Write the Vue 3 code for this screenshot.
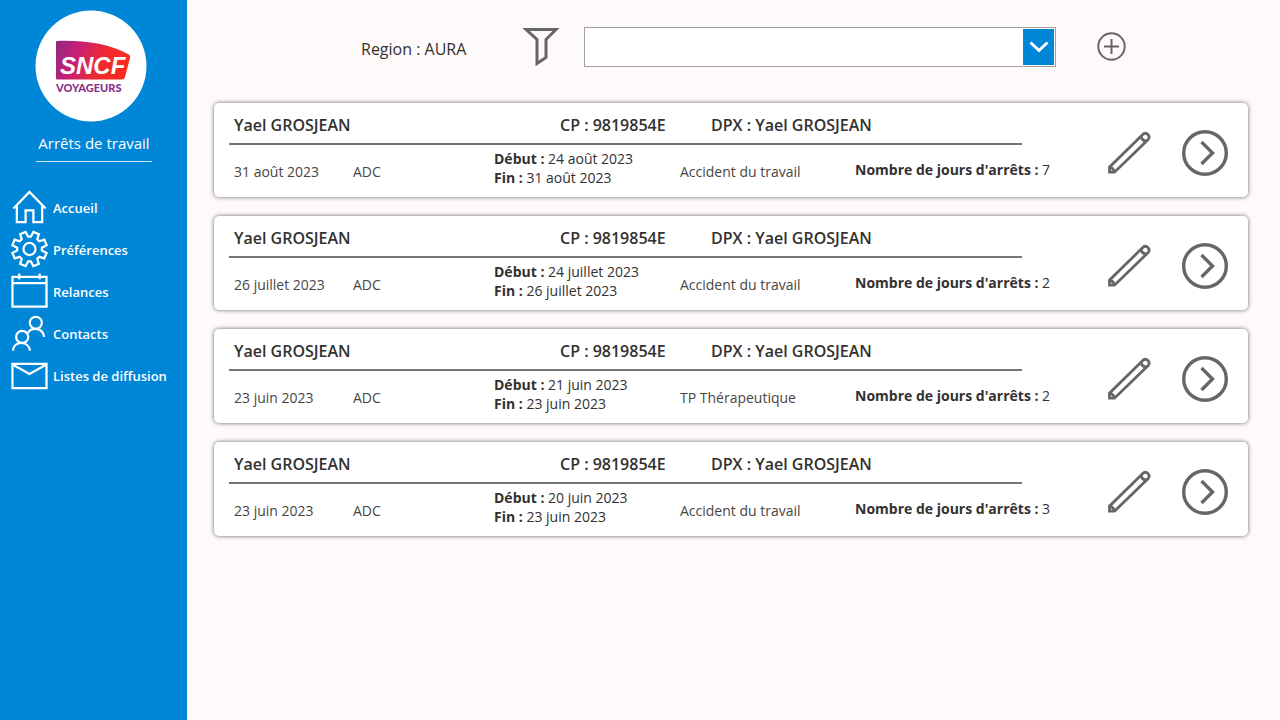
<script setup>
import { ref } from 'vue'

const navItems = [
  { label: 'Accueil', icon: 'home' },
  { label: 'Préférences', icon: 'gear' },
  { label: 'Relances', icon: 'calendar' },
  { label: 'Contacts', icon: 'people' },
  { label: 'Listes de diffusion', icon: 'mail' },
]

const selected = ref('')

const stops = [
  { id: 1, date: '31 août 2023', start: '24 août 2023', end: '31 août 2023', reason: 'Accident du travail', days: 7 },
  { id: 2, date: '26 juillet 2023', start: '24 juillet 2023', end: '26 juillet 2023', reason: 'Accident du travail', days: 2 },
  { id: 3, date: '23 juin 2023', start: '21 juin 2023', end: '23 juin 2023', reason: 'TP Thérapeutique', days: 2 },
  { id: 4, date: '23 juin 2023', start: '20 juin 2023', end: '23 juin 2023', reason: 'Accident du travail', days: 3 },
]

// Outline of an eight-toothed gear centred on (19, 18)
const gearPoints = Array.from({ length: 8 }, (_, i) => {
  const base = (i * Math.PI) / 4 + Math.PI / 8
  return [[-0.28, 12.8], [-0.17, 18], [0.17, 18], [0.28, 12.8]]
    .map(([a, r]) => `${(19 + r * Math.cos(base + a)).toFixed(1)},${(18 + r * Math.sin(base + a)).toFixed(1)}`)
    .join(' ')
}).join(' ')
</script>

<template>
  <div class="app">
    <aside class="sidebar">
      <svg class="logo" viewBox="0 0 112 112" role="img" aria-label="SNCF Voyageurs">
        <defs>
          <linearGradient id="brand" x1="0" y1="0" x2="1" y2="0.2">
            <stop offset="0" stop-color="#8c2a7c" />
            <stop offset="0.3" stop-color="#c4207a" />
            <stop offset="0.7" stop-color="#f02a30" />
            <stop offset="1" stop-color="#fa2a20" />
          </linearGradient>
        </defs>
        <circle cx="56" cy="56" r="55.5" fill="#fff" />
        <path d="M22 31 C46 30 74 33 94.500 45 Q95.500 46 95 48 L90 67 Q89.500 69.500 87 69.500 L22 69.500 Q21 69.500 21 68.500 L21 32 Q21 31 22 31 Z" fill="url(#brand)" />
        <text x="25" y="64" class="logo-name">SNCF</text>
        <text x="21" y="82" class="logo-sub">VOYAGEURS</text>
      </svg>
      <h1 class="title">Arrêts de travail</h1>
      <nav class="nav">
        <a v-for="item in navItems" :key="item.label" href="#" class="nav-link">
          <svg class="nav-icon" viewBox="0 0 38 38" aria-hidden="true">
            <g v-if="item.icon === 'home'">
              <path d="M2.500 19.500 L19 2.500 L35.500 19.500" />
              <path d="M6 16.500 V33.500 H15 V21.500 H23 V33.500 H32 V16.500" />
            </g>
            <g v-else-if="item.icon === 'gear'">
              <polygon :points="gearPoints" />
              <circle cx="19" cy="18" r="6.200" />
            </g>
            <g v-else-if="item.icon === 'calendar'">
              <path d="M1.500 3.500 H36.500 V34 H1.500 Z M1.500 10 H36.500 M8.500 0 V6 M29.500 0 V6" />
            </g>
            <g v-else-if="item.icon === 'people'">
              <circle cx="25.500" cy="7.500" r="6.200" />
              <circle cx="11.500" cy="22" r="6.200" />
              <path d="M2 36 C3 25.500 18 25.500 19.500 36" />
              <path d="M17.500 17.500 C21.500 11.500 33 12.500 34 22" />
            </g>
            <g v-else>
              <path d="M1.500 6.500 H36.500 V31.500 H1.500 Z" />
              <path d="M2 7.500 L19 17 L36 7.500" />
            </g>
          </svg>
          <span>{{ item.label }}</span>
        </a>
      </nav>
    </aside>

    <main class="main">
      <header class="toolbar">
        <label class="region" for="agent">Region : AURA</label>
        <button class="icon-button filter" type="button" aria-label="Filtrer">
          <svg viewBox="0 0 36 38" width="36" height="38" aria-hidden="true">
            <path d="M3 1.500 H33 L23 11.500 V29.500 L14 35.500 V11.500 Z" />
          </svg>
        </button>
        <div class="combo">
          <select id="agent" v-model="selected" class="combo-field">
            <option value=""></option>
            <option value="grosjean">Yael GROSJEAN</option>
          </select>
          <span class="combo-arrow">
            <svg viewBox="0 0 20 12" width="20" height="12" aria-hidden="true">
              <path d="M1.500 1.500 L10 9.500 L18.500 1.500" />
            </svg>
          </span>
        </div>
        <button class="icon-button" type="button" aria-label="Ajouter">
          <svg class="thin" viewBox="0 0 30 30" width="30" height="30" aria-hidden="true">
            <circle cx="14.500" cy="14.500" r="13.200" />
            <path d="M14.500 7 V22 M7 14.500 H22" />
          </svg>
        </button>
      </header>

      <section class="list">
        <article v-for="stop in stops" :key="stop.id" class="card">
          <div class="info">
            <div class="card-head">
              <span>Yael GROSJEAN</span>
              <span>CP : 9819854E</span>
              <span>DPX : Yael GROSJEAN</span>
            </div>
            <div class="card-body">
              <span>{{ stop.date }}</span>
              <span>ADC</span>
              <div class="period">
                <div><b>Début :</b> {{ stop.start }}</div>
                <div><b>Fin :</b> {{ stop.end }}</div>
              </div>
              <span>{{ stop.reason }}</span>
              <span class="days"><b>Nombre de jours d'arrêts :</b> {{ stop.days }}</span>
            </div>
          </div>
          <div class="actions">
            <button class="icon-button" type="button" aria-label="Modifier">
              <svg class="pencil" viewBox="0 0 44 44" width="44" height="44" aria-hidden="true">
                <path d="M2.500 41.200 V36.200 L36 3.300 A3.700 3.700 0 0 1 41.200 8.500 L7.500 41.200 Z" />
                <path d="M2.500 36.200 Q6.500 37 7.500 41.200 M34 5 Q34.500 9.500 39.500 10.200" />
              </svg>
            </button>
            <button class="icon-button" type="button" aria-label="Ouvrir">
              <svg class="bold" viewBox="0 0 46 46" width="46" height="46" aria-hidden="true">
                <circle cx="23" cy="23" r="21.300" />
                <path d="M19.500 12 L30.500 23 L19.500 34" />
              </svg>
            </button>
          </div>
        </article>
      </section>
    </main>
  </div>
</template>

<style>
body {
  background: #fffafa;
}
</style>

<style scoped>
.app {
  display: flex;
  min-height: 100vh;
  font-family: "Open Sans", "Noto Sans", sans-serif;
  color: #323130;
}

.sidebar {
  flex: none;
  width: 187px;
  box-sizing: border-box;
  padding-top: 10px;
  display: flex;
  flex-direction: column;
  background: #0086d6;
  color: #fff;
}

.logo {
  width: 112px;
  height: 112px;
  margin-left: 35px;
}

.logo-name {
  font: italic bold 24px "Liberation Sans", sans-serif;
  fill: #fff;
}

.logo-sub {
  font: 900 11px Lato, sans-serif;
  fill: #8a3088;
}

.title {
  margin: 7px 35px 0 36px;
  padding-bottom: 4px;
  border-bottom: 1px solid #cce7f7;
  font-size: 15px;
  font-weight: 400;
  line-height: 28px;
  text-align: center;
  white-space: nowrap;
}

.nav {
  display: flex;
  flex-direction: column;
  gap: 4px;
  margin-top: 27px;
}

.nav-link {
  display: flex;
  align-items: center;
  gap: 5px;
  height: 38px;
  padding-left: 11px;
  color: #fff;
  font-size: 13px;
  font-weight: 600;
  text-decoration: none;
  white-space: nowrap;
}

.nav-icon {
  flex: none;
  width: 37px;
  height: 38px;
  overflow: visible;
  fill: none;
  stroke: #fff;
  stroke-width: 2.3;
}

.main {
  flex: 1;
  min-width: 0;
  padding: 27px 32px 27px 27px;
}

.toolbar {
  display: flex;
  align-items: center;
  height: 40px;
  padding: 0 121px 0 147px;
}

.region {
  padding-top: 4px;
  font-size: 16px;
  line-height: 22px;
  white-space: nowrap;
}

.icon-button {
  flex: none;
  display: block;
  padding: 0;
  border: 0;
  background: none;
  cursor: pointer;
}

.icon-button svg {
  display: block;
  fill: none;
  stroke: #666;
  stroke-width: 3;
}

.icon-button .thin {
  stroke-width: 2;
}

.icon-button .bold {
  stroke-width: 3.4;
}

.icon-button .pencil {
  stroke-width: 2.8;
}

.filter {
  margin: 0 25px 0 57px;
}

.combo {
  flex: 1;
  display: grid;
  grid-template-columns: 1fr 31px;
  height: 40px;
  box-sizing: border-box;
  margin-right: 41px;
  padding: 1px;
  border: 1px solid #a0a0a0;
  background: #fff;
}

.combo-field {
  grid-area: 1 / 1 / 2 / 3;
  appearance: none;
  padding: 0 40px 0 10px;
  border: 0;
  background: transparent;
  font: inherit;
  outline: none;
}

.combo-arrow {
  grid-area: 1 / 2;
  display: flex;
  align-items: center;
  justify-content: center;
  background: #0086d6;
  pointer-events: none;
}

.combo-arrow svg {
  fill: none;
  stroke: #fff;
  stroke-width: 3;
}

.list {
  display: flex;
  flex-direction: column;
  gap: 19px;
  margin-top: 36px;
}

.card {
  display: flex;
  align-items: center;
  justify-content: space-between;
  min-height: 94px;
  box-sizing: border-box;
  padding: 0 20px 0 15px;
  border-radius: 5px;
  background: #fff;
  box-shadow: 0 0 4px rgba(0, 0, 0, 0.6);
}

.info {
  flex: 1;
  align-self: stretch;
}

.card-head {
  display: grid;
  grid-template-columns: 326fr 151fr 311fr;
  margin-right: 42px;
  padding: 7px 0 3px 5px;
  border-bottom: 2px solid #757575;
  font-size: 16px;
  font-weight: 600;
  line-height: 30px;
}

.card-body {
  display: grid;
  grid-template-columns: 119fr 141fr 186fr 175fr 207fr;
  align-items: center;
  padding: 4px 2px 0 5px;
  font-size: 14px;
  line-height: 19px;
  white-space: nowrap;
}

.card-body > span {
  padding-top: 7px;
  color: #484644;
}

.card-body > .days {
  padding-top: 3px;
  color: #323130;
}

.actions {
  flex: none;
  display: flex;
  align-items: center;
  gap: 31px;
  margin-left: 43px;
  padding-top: 6px;
}
</style>
